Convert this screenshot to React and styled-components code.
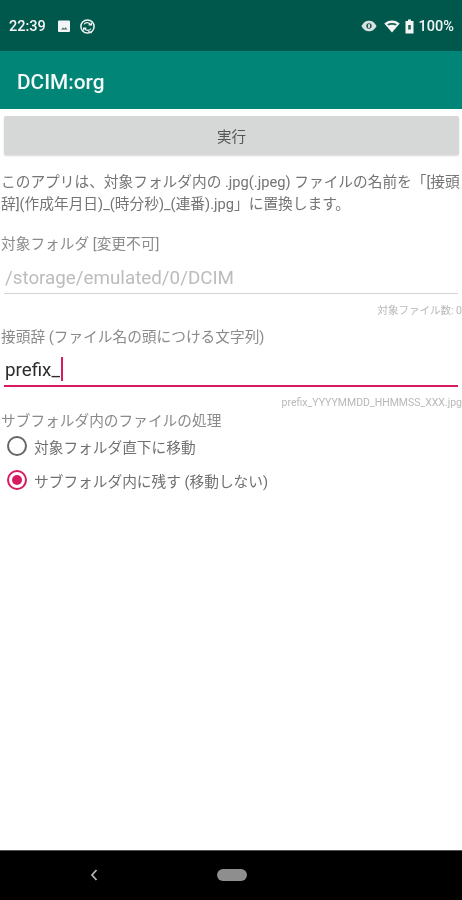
import React from "react";
import styled, { createGlobalStyle } from "styled-components";

const GlobalStyle = createGlobalStyle`
  html, body {
    margin: 0;
    padding: 0;
    background: #fff;
  }
  body {
    font-family: Roboto, "Noto Sans CJK JP", sans-serif;
  }
`;

function App() {
  return (
    <>
      <GlobalStyle />
      <Screen>
        <StatusBar>
          <StatusGroup>
            <Clock>22:39</Clock>
            <svg width="15" height="15" viewBox="0 0 15 15" style={{ marginLeft: 11 }}>
              <rect x="1" y="1.5" width="12" height="11.5" rx="1" fill="#f2f5f4" />
              <path d="M4 10.5 L6 8.5 L7.2 9.8 L8.5 8.2 L10.5 10.5 Z" fill="#3a6a62" />
            </svg>
            <svg width="17" height="17" viewBox="0 0 17 17" style={{ marginLeft: 7 }}>
              <circle cx="8.5" cy="8.5" r="6.6" fill="none" stroke="#eef3f2" strokeWidth="1.5" />
              <path d="M5.2 6.4 C6 4.2 10.4 4 11.4 6.8 M9.6 6.8 L12.4 6.8 L12.4 4.6 M11.8 10.6 C11 12.8 6.6 13 5.6 10.2 M7.4 10.2 L4.6 10.2 L4.6 12.4" fill="none" stroke="#eef3f2" strokeWidth="1.3" />
              <path d="M9 13 L13 15" stroke="#eef3f2" strokeWidth="1" />
            </svg>
          </StatusGroup>
          <StatusGroup>
            <svg width="16" height="12" viewBox="0 0 18 13">
              <path d="M0.5 6.5 C3 1.8 6 0.5 9 0.5 C12 0.5 15 1.8 17.5 6.5 C15 11.2 12 12.5 9 12.5 C6 12.5 3 11.2 0.5 6.5 Z" fill="#d8e2e0" />
              <circle cx="9" cy="6.5" r="3" fill="#20584f" />
              <rect x="8" y="4.5" width="2" height="4" fill="#e6eeec" />
            </svg>
            <svg width="16" height="13" viewBox="0 0 16 13" style={{ marginLeft: 7 }}>
              <path d="M0.3 3.6 C4.5 -0.6 11.5 -0.6 15.7 3.6 L8 12.5 Z" fill="#f2f5f4" />
              <path d="M3.2 4.3 C6 2.4 10 2.4 12.8 4.3 L11.6 5.6 C9.4 4.3 6.6 4.3 4.4 5.6 Z" fill="#1e6258" />
            </svg>
            <svg width="9" height="15" viewBox="0 0 9 15" style={{ marginLeft: 5 }}>
              <path d="M3 0.5 H6 V2 H8.5 V14.5 H0.5 V2 H3 Z" fill="#f2f5f4" />
              <rect x="3.2" y="6" width="2.6" height="4.5" fill="#1e6258" />
            </svg>
            <Battery>100%</Battery>
          </StatusGroup>
        </StatusBar>
        <AppBar>DCIM:org</AppBar>
        <Content>
          <RunButton>実行</RunButton>
          <Description>
            このアプリは、対象フォルダ内の .jpg(.jpeg) ファイルの名前を「[接頭辞](作成年月日)_(時分秒)_(連番).jpg」に置換します。
          </Description>
          <FieldLabel $top={19}>対象フォルダ [変更不可]</FieldLabel>
          <TextField $disabled>/storage/emulated/0/DCIM</TextField>
          <Hint $top={11}>対象ファイル数: 0</Hint>
          <FieldLabel $top={10}>接頭辞 (ファイル名の頭につける文字列)</FieldLabel>
          <TextField>
            prefix_
            <Caret />
          </TextField>
          <Hint $top={10}>prefix_YYYYMMDD_HHMMSS_XXX.jpg</Hint>
          <FieldLabel $top={2}>サブフォルダ内のファイルの処理</FieldLabel>
          <RadioGroup>
            <RadioRow>
              <Radio />
              <RadioText>対象フォルダ直下に移動</RadioText>
            </RadioRow>
            <RadioRow>
              <Radio $checked />
              <RadioText>サブフォルダ内に残す (移動しない)</RadioText>
            </RadioRow>
          </RadioGroup>
        </Content>
        <NavBar>
          <BackIcon width="10" height="14" viewBox="0 0 10 14">
            <path d="M7.5 2 L3 7 L7.5 12" fill="none" stroke="#b4b4b4" strokeWidth="1.8" />
          </BackIcon>
          <HomePill />
        </NavBar>
      </Screen>
    </>
  );
}

const Screen = styled.div`
  width: 462px;
  height: 900px;
  display: flex;
  flex-direction: column;
  overflow: hidden;
  background: #fff;
  filter: blur(0.6px);
`;

const StatusBar = styled.div`
  height: 51px;
  flex: none;
  display: flex;
  align-items: center;
  justify-content: space-between;
  padding: 1px 8px 0 9px;
  box-sizing: border-box;
  background: #00574b;
  color: #f2f5f4;
`;

const StatusGroup = styled.div`
  display: flex;
  align-items: center;
`;

const Clock = styled.span`
  font-size: 14.5px;
  font-weight: 500;
`;

const Battery = styled.span`
  font-size: 14.5px;
  font-weight: 500;
  margin-left: 5px;
`;

const AppBar = styled.div`
  height: 58px;
  flex: none;
  display: flex;
  align-items: center;
  padding: 3px 0 0 17px;
  box-sizing: border-box;
  background: #008577;
  color: #f4f9f8;
  font-size: 20.8px;
  font-weight: 500;
`;

const Content = styled.div`
  flex: 1;
  padding: 7px 0 0;
  background: #fff;
`;

const RunButton = styled.div`
  height: 39px;
  margin: 0 3px 0 4px;
  display: flex;
  align-items: center;
  justify-content: center;
  border-radius: 2px;
  background: #d6d7d7;
  color: #555;
  font-size: 14.5px;
  box-shadow: 0 1px 2px rgba(0, 0, 0, 0.15);
`;

const Description = styled.p`
  margin: 16px 0 0;
  padding-left: 1px;
  font-size: 14.7px;
  line-height: 22px;
  color: #747474;
`;

const FieldLabel = styled.div`
  margin-top: ${(p) => p.$top}px;
  padding-left: 1px;
  font-size: 14.7px;
  line-height: 20px;
  color: #8a8a8a;
`;

const TextField = styled.div`
  height: 35px;
  margin: 5px 4px 0;
  padding: 3px 1px 0;
  box-sizing: border-box;
  display: flex;
  align-items: center;
  font-size: 18.8px;
  color: ${(p) => (p.$disabled ? "#bcbcbc" : "#2c2c2c")};
  border-bottom: ${(p) => (p.$disabled ? "1.5px solid #d4d4d4" : "2px solid #d81b60")};
`;

const Caret = styled.span`
  width: 2px;
  height: 24px;
  margin: -2px 0 0 1px;
  background: #d81b60;
`;

const Hint = styled.div`
  margin-top: ${(p) => p.$top}px;
  font-size: 10.5px;
  line-height: 12px;
  text-align: right;
  white-space: nowrap;
  color: #b8b8b8;
`;

const RadioGroup = styled.div`
  margin-top: -2px;
`;

const RadioRow = styled.div`
  height: 34px;
  padding-left: 7px;
  display: flex;
  align-items: center;
`;

const Radio = styled.span`
  width: 20px;
  height: 20px;
  flex: none;
  box-sizing: border-box;
  border-radius: 50%;
  border: 2px solid ${(p) => (p.$checked ? "#d81b60" : "#666")};
  display: flex;
  align-items: center;
  justify-content: center;
  &::after {
    content: "";
    width: 10px;
    height: 10px;
    border-radius: 50%;
    background: ${(p) => (p.$checked ? "#d81b60" : "transparent")};
  }
`;

const RadioText = styled.span`
  margin-left: 7px;
  font-size: 14.7px;
  color: #707070;
`;

const NavBar = styled.div`
  height: 50px;
  flex: none;
  position: relative;
  background: #000;
  border-top: 1px solid #555;
  box-sizing: border-box;
`;

const BackIcon = styled.svg`
  position: absolute;
  left: 89px;
  top: 17px;
`;

const HomePill = styled.div`
  width: 30px;
  height: 12px;
  border-radius: 6px;
  background: #8e8e8e;
  position: absolute;
  left: 217px;
  top: 18px;
`;

export default App;
